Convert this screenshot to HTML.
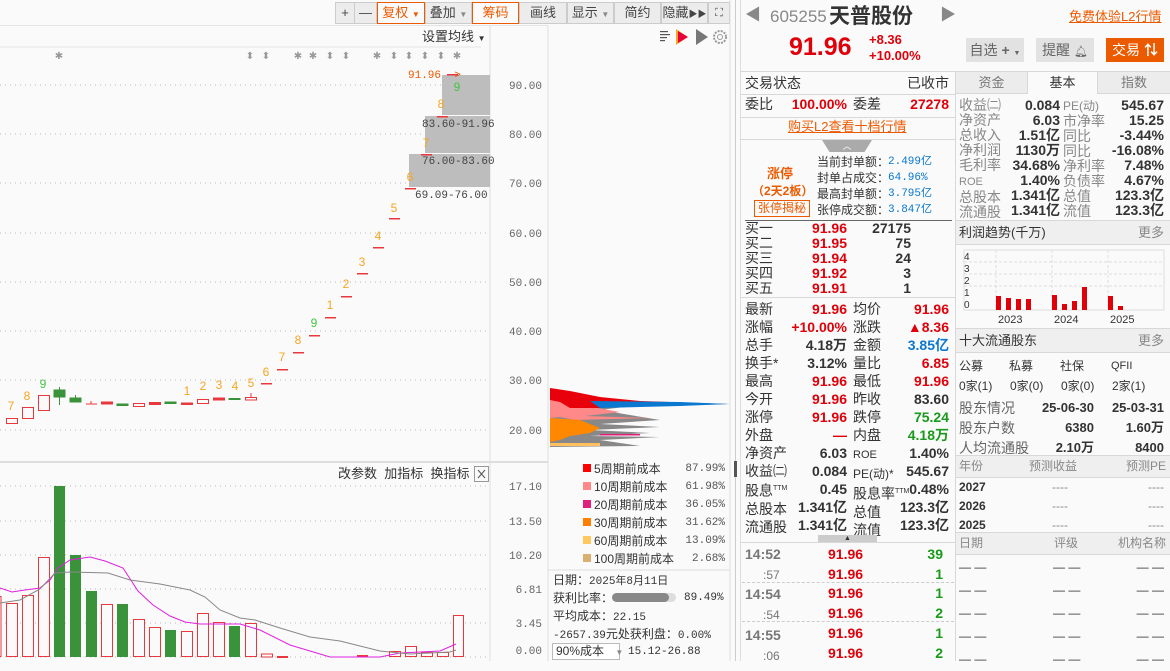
<!DOCTYPE html>
<html><head><meta charset="utf-8">
<style>
*{margin:0;padding:0;box-sizing:border-box}
body{width:1170px;height:661px;overflow:hidden;background:#fafafa;position:relative;font-family:"Liberation Sans","Noto Sans CJK SC",sans-serif;color:#333}
.a{position:absolute;white-space:nowrap;line-height:16px}
.t{font-size:14px}
.s{font-size:12px}
.m{font-family:"Liberation Mono","Noto Sans CJK SC",monospace;font-size:11px;color:#555}
.red{color:#e0000a}.grn{color:#1a9a1a}.blu{color:#0a78d0}.org{color:#ec5a00}.gry{color:#888}
.b{font-weight:bold}
.r{text-align:right}
.hl{position:absolute;height:1px;background:#d8d8d8}
.vl{position:absolute;width:1px;background:#d8d8d8}
.btn{position:absolute;top:2px;height:22px;border:1px solid #ccc;background:#ececec;font-size:13px;text-align:center;line-height:20px;color:#444}
</style></head><body>

<!-- toolbar -->
<div class="btn" style="left:335px;width:20px">+</div>
<div class="btn" style="left:354px;width:23px">—</div>
<div class="btn org" style="left:377px;width:48px;border-color:#ec5a00;background:#fafafa;color:#ec5a00">复权 <span style="font-size:8px">▼</span></div>
<div class="btn" style="left:425px;width:47px">叠加 <span style="font-size:8px;color:#888">▼</span></div>
<div class="btn" style="left:472px;width:47px;border-color:#ec5a00;background:#fafafa;color:#ec5a00">筹码</div>
<div class="btn" style="left:519px;width:48px">画线</div>
<div class="btn" style="left:567px;width:47px">显示 <span style="font-size:8px;color:#888">▼</span></div>
<div class="btn" style="left:614px;width:47px">简约</div>
<div class="btn" style="left:661px;width:47px">隐藏<span style="font-size:9px">▶▶</span></div>
<div class="btn" style="left:708px;width:22px;font-size:11px">⛶</div>
<div class="hl" style="left:0;top:25px;width:548px;background:#e4e4e4"></div>

<!-- main chart svg -->
<svg class="a" style="left:0;top:0" width="735" height="661">
<rect x="0" y="26" width="490" height="436" fill="#fafafa"/>
<line x1="0" y1="47" x2="481" y2="47" stroke="#e6e6e6"/>
<line x1="490" y1="26" x2="490" y2="661" stroke="#ddd"/>
<line x1="548" y1="26" x2="548" y2="661" stroke="#ddd"/>
<line x1="0" y1="462" x2="548" y2="462" stroke="#ddd" stroke-width="2"/>
<line x1="548" y1="570" x2="730" y2="570" stroke="#ddd"/>
<line x1="730" y1="0" x2="730" y2="661" stroke="#ddd"/>
<g stroke="#bbb" stroke-dasharray="1,4">
<line x1="0" y1="85" x2="490" y2="85"/><line x1="0" y1="134" x2="490" y2="134"/><line x1="0" y1="183" x2="490" y2="183"/><line x1="0" y1="233" x2="490" y2="233"/><line x1="0" y1="282" x2="490" y2="282"/><line x1="0" y1="331" x2="490" y2="331"/><line x1="0" y1="380" x2="490" y2="380"/><line x1="0" y1="430" x2="490" y2="430"/>
<line x1="0" y1="486" x2="490" y2="486"/><line x1="0" y1="521" x2="490" y2="521"/><line x1="0" y1="555" x2="490" y2="555"/><line x1="0" y1="589" x2="490" y2="589"/><line x1="0" y1="623" x2="490" y2="623"/><line x1="0" y1="657" x2="490" y2="657"/>
</g>
<rect x="442" y="75" width="48" height="40" fill="#bdbdbd"/>
<rect x="425" y="116" width="65" height="37" fill="#bdbdbd"/>
<rect x="409" y="154" width="81" height="33" fill="#bdbdbd"/>
<g font-family="Liberation Mono,monospace" font-size="11" fill="#444">
<text x="422" y="127">83.60-91.96</text><text x="422" y="164">76.00-83.60</text><text x="415" y="198">69.09-76.00</text>
</g>
<text x="408" y="78" font-family="Liberation Mono,monospace" font-size="11" fill="#ec5a00">91.96 -&gt;</text>
<g font-size="10" fill="#999" text-anchor="middle">
<text x="59" y="59">✱</text><text x="250" y="59">⬍</text><text x="266" y="59">⬍</text><text x="298" y="59">✱</text><text x="313" y="59">✱</text><text x="330" y="59">⬍</text><text x="346" y="59">⬍</text><text x="377" y="59">✱</text><text x="394" y="59">⬍</text><text x="409" y="59">⬍</text><text x="425" y="59">⬍</text><text x="441" y="59">⬍</text><text x="457" y="59">✱</text>
</g>
<g stroke="#e8383d" fill="#fafafa" stroke-width="1">
<rect x="6.5" y="418.5" width="11" height="5"/>
<rect x="22.5" y="407.5" width="11" height="11"/>
<rect x="38.5" y="395.5" width="11" height="15"/>
<line x1="86" y1="404" x2="97" y2="404"/><line x1="91" y1="401" x2="91" y2="404"/>
<rect x="101.5" y="402" width="11" height="2" fill="#e8383d"/>
<rect x="133.5" y="403.5" width="11" height="3"/>
<rect x="149.5" y="402.5" width="11" height="2" fill="#e8383d"/>
<rect x="181.5" y="403" width="11" height="1.5" fill="#e8383d"/>
<rect x="197.5" y="399.5" width="11" height="4"/>
<rect x="213.5" y="398" width="11" height="2" fill="#e8383d"/>
<rect x="245.5" y="397.5" width="11" height="2.5"/><line x1="251" y1="393" x2="251" y2="397"/>
</g>
<g fill="#e8383d">
<rect x="261" y="383" width="11" height="1.5"/><rect x="277" y="369" width="11" height="1.5"/><rect x="293" y="352" width="11" height="1.5"/><rect x="309" y="335" width="11" height="1.5"/><rect x="325" y="317" width="11" height="1.5"/><rect x="341" y="296" width="11" height="1.5"/><rect x="357" y="273" width="11" height="1.5"/><rect x="373" y="247" width="11" height="1.5"/><rect x="389" y="218" width="11" height="1.5"/><rect x="405" y="188" width="11" height="1.5"/><rect x="421" y="154" width="11" height="1.5"/><rect x="437" y="116" width="11" height="1.5"/><rect x="447" y="74" width="11" height="1.5"/>
</g>
<g fill="#3a923a" stroke="#3a923a">
<rect x="54" y="390" width="11" height="7"/><line x1="59.5" y1="387" x2="59.5" y2="405"/>
<rect x="70" y="398" width="11" height="4"/><line x1="75.5" y1="395" x2="75.5" y2="402"/>
<rect x="117" y="404" width="11" height="1.5"/>
<rect x="165" y="402" width="11" height="1.5"/>
<rect x="229" y="398.5" width="11" height="1"/>
</g>
<g font-size="12" fill="#f5a623" text-anchor="middle">
<text x="11" y="410">7</text><text x="27" y="400">8</text><text x="43" y="388" fill="#44c444">9</text>
<text x="187" y="395">1</text><text x="203" y="390">2</text><text x="219" y="389">3</text><text x="235" y="390">4</text><text x="251" y="387">5</text>
<text x="266" y="376">6</text><text x="282" y="361">7</text><text x="298" y="344">8</text><text x="314" y="327" fill="#44c444">9</text><text x="330" y="309">1</text><text x="346" y="288">2</text><text x="362" y="266">3</text><text x="378" y="240">4</text><text x="394" y="212">5</text><text x="410" y="181">6</text><text x="426" y="147">7</text><text x="441" y="108">8</text><text x="457" y="91" fill="#44c444">9</text>
</g>
<g stroke="#e8383d" fill="#fafafa">
<rect x="-1" y="596.5" width="2" height="60"/>
<rect x="6.5" y="603.5" width="11" height="53"/>
<rect x="22.5" y="595.5" width="11" height="61"/>
<rect x="38.5" y="557.5" width="11" height="99"/>
<rect x="101.5" y="604.5" width="11" height="52"/>
<rect x="133.5" y="619.5" width="11" height="37"/>
<rect x="149.5" y="627.5" width="11" height="29"/>
<rect x="181.5" y="631.5" width="11" height="25"/>
<rect x="197.5" y="613.5" width="11" height="43"/>
<rect x="213.5" y="622.5" width="11" height="34"/>
<rect x="245.5" y="623.5" width="11" height="33"/>
<rect x="261.5" y="654" width="11" height="3"/>
<rect x="389.5" y="651.5" width="11" height="5"/>
<rect x="405.5" y="646.5" width="11" height="10"/>
<rect x="421.5" y="652.5" width="11" height="4"/>
<rect x="437.5" y="652.5" width="11" height="4"/>
<rect x="453.5" y="615.5" width="10" height="41"/>
</g>
<g fill="#e8383d"><rect x="277" y="656" width="11" height="2"/><rect x="357" y="655" width="11" height="2"/></g>
<g fill="#3a923a">
<rect x="54" y="486" width="11" height="171"/><rect x="70" y="555" width="11" height="102"/><rect x="86" y="591" width="11" height="66"/><rect x="117" y="604" width="11" height="53"/><rect x="165" y="630" width="11" height="27"/><rect x="229" y="626" width="11" height="31"/>
</g>
<polyline fill="none" stroke="#e020e0" stroke-width="1" points="0,588 12,592 25,590 40,588 50,580 58,568 70,560 90,557 105,561 123,568 138,591 153,605 170,616 185,622 200,624 240,624 260,630 290,645 330,657 380,657 400,653 440,651 456,644"/>
<polyline fill="none" stroke="#888" stroke-width="1" points="0,603 20,600 40,589 55,573 70,572 108,573 130,580 160,584 190,590 205,597 220,610 240,618 255,620 280,628 310,637 340,641 380,651 410,654 450,652 456,650"/>
<g font-family="Liberation Mono,monospace" font-size="11" fill="#666" text-anchor="end">
<text x="542" y="89">90.00</text><text x="542" y="138">80.00</text><text x="542" y="187">70.00</text><text x="542" y="237">60.00</text><text x="542" y="286">50.00</text><text x="542" y="335">40.00</text><text x="542" y="384">30.00</text><text x="542" y="434">20.00</text>
<text x="542" y="490">17.10</text><text x="542" y="525">13.50</text><text x="542" y="559">10.20</text><text x="542" y="593">6.81</text><text x="542" y="627">3.45</text><text x="542" y="654">0.00</text>
</g>
<!-- chips -->
<polygon fill="#888" points="550,404 640,405 600,410 660,420 600,424 660,427 590,430 650,433 590,436 660,437 600,440 640,446 550,447"/>
<polygon fill="#f88" points="550,390 565,395 580,405 620,412 585,416 650,418 575,420 560,417 550,418"/>
<polygon fill="#e8000a" points="550,388 570,391 600,397 640,401 700,403 728,404 640,405 600,408 570,408 560,402 550,400"/>
<polygon fill="#0a78d0" points="590,401 680,402 730,404 680,406 600,408"/>
<polygon fill="#ff8800" points="550,418 580,420 600,428 590,433 570,436 560,440 550,442"/>
<polygon fill="#ffc060" points="550,443 600,443 600,446 550,446"/>
<rect x="600" y="434" width="40" height="1.5" fill="#e0207a"/>
<g><rect x="660" y="31" width="8" height="1.2" fill="#555"/><rect x="660" y="34" width="10" height="1.2" fill="#555"/><rect x="660" y="37" width="7" height="1.2" fill="#555"/><rect x="660" y="40" width="5" height="1.2" fill="#555"/>
<polygon points="676,29 688,37 676,45" fill="#f5a623"/><polygon points="678,31 688,37 678,43" fill="#e8003a"/>
<polygon points="696,29 708,37 696,45" fill="#777"/>
<circle cx="720" cy="37" r="6" fill="none" stroke="#999" stroke-width="2" stroke-dasharray="2,1.2"/><circle cx="720" cy="37" r="2.5" fill="none" stroke="#999"/></g>
<rect x="474.5" y="466.5" width="14" height="15" fill="#fafafa" stroke="#999"/>
<path d="M478 470 L485 478 M485 470 L478 478" stroke="#555"/>
</svg>
<div class="a s" style="left:422px;top:29px;font-size:13px">设置均线 <span style="font-size:8px">▼</span></div>
<div class="a s" style="left:338px;top:466px;font-size:13px">改参数&nbsp;&nbsp;加指标&nbsp;&nbsp;换指标</div>

<!-- chip legend -->
<div class="a" style="left:583px;top:464px;width:8px;height:8px;background:#f00"></div>
<div class="a" style="left:583px;top:482px;width:8px;height:8px;background:#f88"></div>
<div class="a" style="left:583px;top:500px;width:8px;height:8px;background:#e0207a"></div>
<div class="a" style="left:583px;top:518px;width:8px;height:8px;background:#ff8000"></div>
<div class="a" style="left:583px;top:536px;width:8px;height:8px;background:#ffc860"></div>
<div class="a" style="left:583px;top:554px;width:8px;height:8px;background:#d8b070"></div>
<div class="a s" style="left:594px;top:461px">5周期前成本</div><div class="a m r" style="left:660px;width:65px;top:461px">87.99%</div>
<div class="a s" style="left:594px;top:479px">10周期前成本</div><div class="a m r" style="left:660px;width:65px;top:479px">61.98%</div>
<div class="a s" style="left:594px;top:497px">20周期前成本</div><div class="a m r" style="left:660px;width:65px;top:497px">36.05%</div>
<div class="a s" style="left:594px;top:515px">30周期前成本</div><div class="a m r" style="left:660px;width:65px;top:515px">31.62%</div>
<div class="a s" style="left:594px;top:533px">60周期前成本</div><div class="a m r" style="left:660px;width:65px;top:533px">13.09%</div>
<div class="a s" style="left:594px;top:551px">100周期前成本</div><div class="a m r" style="left:660px;width:65px;top:551px">2.68%</div>
<div class="a s" style="left:553px;top:572px">日期：<span class="m" style="color:#333">2025年8月11日</span></div>
<div class="a s" style="left:553px;top:590px">获利比率：</div>
<div class="a" style="left:612px;top:593px;width:64px;height:9px;border-radius:5px;background:#ddd"></div>
<div class="a" style="left:612px;top:593px;width:57px;height:9px;border-radius:5px;background:#888"></div>
<div class="a m" style="left:684px;top:590px;color:#333">89.49%</div>
<div class="a s" style="left:553px;top:608px">平均成本：<span class="m" style="color:#333">22.15</span></div>
<div class="a s" style="left:553px;top:626px"><span class="m" style="color:#333">-2657.39</span>元处获利盘：<span class="m" style="color:#333">0.00%</span></div>
<div class="a s" style="left:552px;top:643px;width:68px;height:17px;border:1px solid #bbb;background:#fff;line-height:15px;padding-left:3px">90%成本 <span style="font-size:8px;color:#888;margin-left:8px">▼</span></div>
<div class="a m" style="left:628px;top:644px;color:#333">15.12-26.88</div>

<!-- splitter -->
<div class="vl" style="left:735px;top:0;height:661px;background:#ccc"></div>
<div class="a" style="left:734px;top:461px;width:3px;height:16px;background:#555"></div>
<div class="vl" style="left:740px;top:0;height:661px;background:#ddd"></div>

<!-- right header -->
<div class="a" style="left:745px;top:8px;font-size:16px;color:#888">◀</div>
<div class="a" style="left:770px;top:7px;font-size:17px;color:#888;line-height:20px">605255</div>
<div class="a b" style="left:829px;top:4px;font-size:21px;color:#333;line-height:26px">天普股份</div>
<div class="a" style="left:940px;top:8px;font-size:16px;color:#888">▶</div>
<div class="a org" style="left:1069px;top:9px;font-size:13px;text-decoration:underline">免费体验L2行情</div>
<div class="a b red" style="left:789px;top:33px;font-size:25px;line-height:28px">91.96</div>
<div class="a b red" style="left:869px;top:32px;font-size:13px;line-height:16px">+8.36<br>+10.00%</div>
<div class="a" style="left:966px;top:38px;width:58px;height:24px;background:#e2e2e2;font-size:14px;line-height:24px;text-align:center;color:#666">自选 <b>+</b> <span style="font-size:7px">▼</span></div>
<div class="a" style="left:1036px;top:38px;width:58px;height:24px;background:#e2e2e2;font-size:14px;line-height:24px;text-align:center;color:#666">提醒 <span style="font-size:11px">🔔︎</span></div>
<div class="a" style="left:1106px;top:38px;width:58px;height:24px;background:#ec5a00;font-size:14px;line-height:24px;text-align:center;color:#fff">交易 <b>⇅</b></div>

<div class="hl" style="left:740px;top:71px;width:430px"></div>
<div class="vl" style="left:955px;top:71px;height:590px"></div>

<!-- left info -->
<div class="a t" style="left:745px;top:75px">交易状态</div>
<div class="a t r" style="right:221px;top:75px">已收市</div>
<div class="hl" style="left:740px;top:94px;width:215px"></div>
<div class="a t" style="left:745px;top:96px">委比</div>
<div class="a t b red r" style="right:323px;top:96px">100.00%</div>
<div class="a t" style="left:853px;top:96px">委差</div>
<div class="a t b red r" style="right:221px;top:96px">27278</div>
<div class="hl" style="left:740px;top:117px;width:215px"></div>
<div class="a org" style="left:788px;top:119px;font-size:13px;text-decoration:underline">购买L2查看十档行情</div>
<div class="hl" style="left:740px;top:139px;width:215px"></div>
<div class="a" style="left:822px;top:140px;width:50px;height:12px;background:#aaa;clip-path:polygon(0 0,100% 0,85% 100%,15% 100%);color:#fff;font-size:9px;text-align:center;line-height:12px">︿</div>
<div class="a b org" style="left:767px;top:166px;font-size:13px">涨停</div>
<div class="a b org" style="left:752px;top:183px;font-size:12px">（2天2板）</div>
<div class="a org" style="left:754px;top:200px;width:56px;height:17px;border:1px solid #ec5a00;font-size:12px;line-height:15px;text-align:center">张停揭秘</div>
<div class="a s" style="left:817px;top:154px;line-height:16px">当前封单额：<br>封单占成交：<br>最高封单额：<br>张停成交额：</div>
<div class="a m blu" style="left:888px;top:154px;line-height:16px">2.499亿<br>64.96%<br>3.795亿<br>3.847亿</div>
<div class="hl" style="left:745px;top:220px;width:207px;background:#666"></div>
<div class="a t" style="left:745px;top:221px;line-height:15px">买一<br>买二<br>买三<br>买四<br>买五</div>
<div class="a t b red r" style="right:323px;top:221px;line-height:15px">91.96<br>91.95<br>91.94<br>91.92<br>91.91</div>
<div class="a t b r" style="right:259px;top:221px;line-height:15px">27175<br>75<br>24<br>3<br>1</div>
<div class="hl" style="left:740px;top:297px;width:215px"></div>
<div class="a t" style="left:745px;top:300px;line-height:18px">最新<br>涨幅<br>总手<br>换手*<br>最高<br>今开<br>涨停<br>外盘<br>净资产<br>收益㈡<br>股息<sup style="font-size:7px">TTM</sup><br>总股本<br>流通股</div>
<div class="a t b r" style="right:323px;top:300px;line-height:18px"><span class="red">91.96</span><br><span class="red">+10.00%</span><br>4.18万<br>3.12%<br><span class="red">91.96</span><br><span class="red">91.96</span><br><span class="red">91.96</span><br><span class="red">—</span><br>6.03<br>0.084<br>0.45<br>1.341亿<br>1.341亿</div>
<div class="a t" style="left:853px;top:300px;line-height:18px">均价<br>涨跌<br>金额<br>量比<br>最低<br>昨收<br>跌停<br>内盘<br><span style="font-size:11px">ROE</span><br><span style="font-size:12px">PE(动)*</span><br>股息率<sup style="font-size:7px">TTM</sup><br>总值<br>流值</div>
<div class="a t b r" style="right:221px;top:300px;line-height:18px"><span class="red">91.96</span><br><span class="red">▲8.36</span><br><span class="blu">3.85亿</span><br><span class="red">6.85</span><br><span class="red">91.96</span><br>83.60<br><span class="grn">75.24</span><br><span class="grn">4.18万</span><br>1.40%<br>545.67<br>0.48%<br>123.3亿<br>123.3亿</div>
<div class="a" style="left:818px;top:535px;width:59px;height:7px;background:#ccc;font-size:7px;line-height:7px;text-align:center;color:#333">▲</div>
<div class="hl" style="left:740px;top:542px;width:215px"></div>
<div class="a t b gry" style="left:745px;top:545px;line-height:19.7px;color:#777">14:52<br><span style="font-weight:normal;font-size:12px;padding-left:18px">:57</span><br>14:54<br><span style="font-weight:normal;font-size:12px;padding-left:18px">:54</span><br>14:55<br><span style="font-weight:normal;font-size:12px;padding-left:18px">:06</span></div>
<div class="a t b red" style="left:828px;top:545px;line-height:19.7px">91.96<br>91.96<br>91.96<br>91.96<br>91.96<br>91.96</div>
<div class="a t b grn r" style="right:227px;top:545px;line-height:19.7px">39<br>1<br>1<br>2<br>1<br>2</div>
<div class="hl" style="left:742px;top:582px;width:212px;background:none;border-top:1px dashed #ccc"></div>
<div class="hl" style="left:742px;top:621px;width:212px;background:none;border-top:1px dashed #ccc"></div>

<!-- right column -->
<div class="a" style="left:956px;top:72px;width:71px;height:22px;background:#ececec;border-bottom:1px solid #d8d8d8;font-size:13px;text-align:center;line-height:22px;color:#777">资金</div>
<div class="a" style="left:1027px;top:72px;width:71px;height:22px;background:#fafafa;border-left:1px solid #d8d8d8;border-right:1px solid #d8d8d8;font-size:13px;text-align:center;line-height:22px">基本</div>
<div class="a" style="left:1098px;top:72px;width:72px;height:22px;background:#ececec;border-bottom:1px solid #d8d8d8;font-size:13px;text-align:center;line-height:22px;color:#777">指数</div>
<div class="a t gry" style="left:959px;top:98px;line-height:15px;color:#888">收益㈡<br>净资产<br>总收入<br>净利润<br>毛利率<br><span style="font-size:11px">ROE</span><br>总股本<br>流通股</div>
<div class="a t b r" style="right:110px;top:98px;line-height:15px">0.084<br>6.03<br>1.51亿<br>1130万<br>34.68%<br>1.40%<br>1.341亿<br>1.341亿</div>
<div class="a t" style="left:1063px;top:98px;line-height:15px;color:#888"><span style="font-size:12px">PE(动)</span><br>市净率<br>同比<br>同比<br>净利率<br>负债率<br>总值<br>流值</div>
<div class="a t b r" style="right:6px;top:98px;line-height:15px">545.67<br>15.25<br>-3.44%<br>-16.08%<br>7.48%<br>4.67%<br>123.3亿<br>123.3亿</div>
<div class="a" style="left:956px;top:220px;width:214px;height:25px;background:#efefef;border-top:1px solid #d8d8d8;border-bottom:1px solid #d8d8d8"></div>
<div class="a" style="left:959px;top:225px;font-size:13px">利润趋势(千万)</div>
<div class="a gry" style="left:1138px;top:225px;font-size:13px">更多</div>
<svg class="a" style="left:956px;top:246px" width="214" height="82">
<g stroke="#ddd" stroke-dasharray="3,2"><line x1="8" y1="4" x2="208" y2="4"/><line x1="8" y1="16" x2="208" y2="16"/><line x1="8" y1="28" x2="208" y2="28"/><line x1="8" y1="40" x2="208" y2="40"/><line x1="40" y1="4" x2="40" y2="64"/><line x1="96" y1="4" x2="96" y2="64"/><line x1="152" y1="4" x2="152" y2="64"/></g>
<rect x="8" y="4" width="200" height="60" fill="none" stroke="#ddd"/>
<g font-size="10" fill="#333" font-family="Liberation Sans"><text x="8" y="14">4</text><text x="8" y="26">3</text><text x="8" y="38">2</text><text x="8" y="50">1</text><text x="8" y="62">0</text>
<text x="42" y="77" font-size="11">2023</text><text x="98" y="77" font-size="11">2024</text><text x="154" y="77" font-size="11">2025</text></g>
<g fill="#e0000a"><rect x="40" y="50" width="5" height="14"/><rect x="50" y="52" width="5" height="12"/><rect x="60" y="53" width="5" height="11"/><rect x="70" y="53" width="5" height="11"/><rect x="96" y="49" width="5" height="15"/><rect x="106" y="58" width="5" height="6"/><rect x="116" y="55" width="5" height="9"/><rect x="126" y="41" width="5" height="23"/><rect x="152" y="50" width="5" height="14"/><rect x="162" y="60" width="5" height="4"/></g>
</svg>
<div class="a" style="left:956px;top:328px;width:214px;height:25px;background:#efefef;border-top:1px solid #d8d8d8;border-bottom:1px solid #d8d8d8"></div>
<div class="a" style="left:959px;top:333px;font-size:13px">十大流通股东</div>
<div class="a gry" style="left:1138px;top:333px;font-size:13px">更多</div>
<div class="a s" style="left:959px;top:358px">公募</div><div class="a s" style="left:1009px;top:358px">私募</div><div class="a s" style="left:1060px;top:358px">社保</div><div class="a s" style="left:1111px;top:358px;font-size:11px">QFII</div>
<div class="a s" style="left:959px;top:378px">0家(1)</div><div class="a s" style="left:1010px;top:378px">0家(0)</div><div class="a s" style="left:1061px;top:378px">0家(0)</div><div class="a s" style="left:1112px;top:378px">2家(1)</div>
<div class="a t gry" style="left:959px;top:398px;line-height:20px;color:#666">股东情况<br>股东户数<br>人均流通股</div>
<div class="a b r" style="right:76px;top:398px;line-height:20px;font-size:13px">25-06-30<br>6380<br>2.10万</div>
<div class="a b r" style="right:6px;top:398px;line-height:20px;font-size:13px">25-03-31<br>1.60万<br>8400</div>
<div class="a" style="left:956px;top:455px;width:214px;height:23px;background:#efefef;border-top:1px solid #d8d8d8;border-bottom:1px solid #d8d8d8"></div>
<div class="a s gry" style="left:959px;top:458px">年份</div><div class="a s gry" style="left:1029px;top:458px">预测收益</div><div class="a s gry r" style="right:4px;top:458px">预测PE</div>
<div class="a s b" style="left:959px;top:478px;line-height:19px">2027<br>2026<br>2025</div>
<div class="a s gry" style="left:1052px;top:478px;line-height:19px">----<br>----<br>----</div>
<div class="a s gry r" style="right:6px;top:478px;line-height:19px">----<br>----<br>----</div>
<div class="a" style="left:956px;top:532px;width:214px;height:23px;background:#efefef;border-top:1px solid #d8d8d8;border-bottom:1px solid #d8d8d8"></div>
<div class="a s gry" style="left:959px;top:535px">日期</div><div class="a s gry" style="left:1054px;top:535px">评级</div><div class="a s gry r" style="right:4px;top:535px">机构名称</div>
<div class="a s" style="left:959px;top:556px;line-height:23px">— —<br>— —<br>— —<br>— —<br>— —</div>
<div class="a s" style="left:1053px;top:556px;line-height:23px">— —<br>— —<br>— —<br>— —<br>— —</div>
<div class="a s r" style="right:6px;top:556px;line-height:23px">— —<br>— —<br>— —<br>— —<br>— —</div>
</body></html>
